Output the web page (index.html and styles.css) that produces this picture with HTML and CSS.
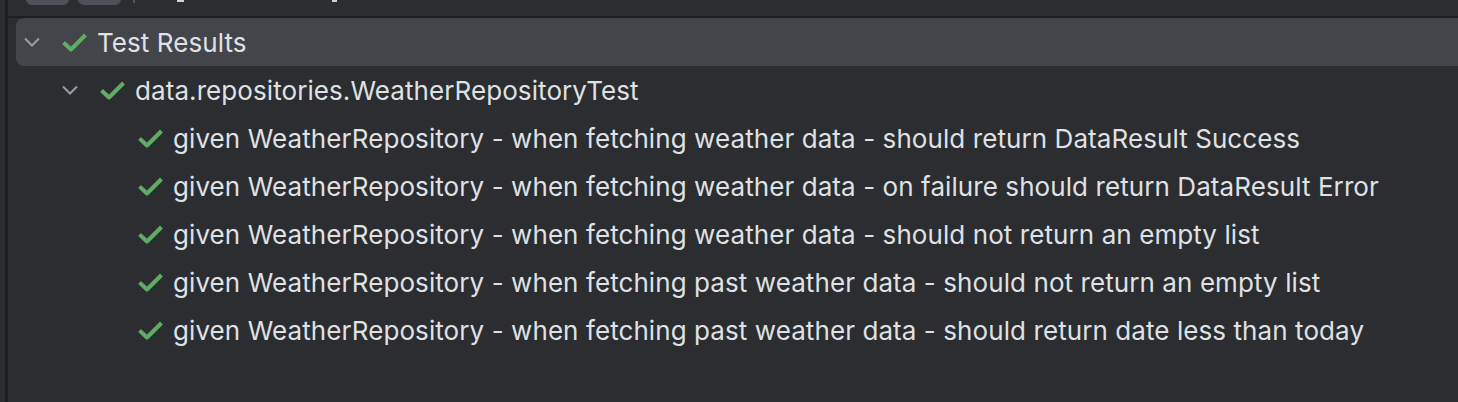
FILE: index.html
```html
<!DOCTYPE html>
<html>
<head>
<meta charset="utf-8">
<link rel="stylesheet" href="styles.css">
</head>
<body>
<div class="app">
  <div class="gutter"></div>
  <div class="divider"></div>
  <div class="panel">
    <div class="toolbar">
      <span class="tb-btn"></span>
      <span class="tb-btn"></span>
      <span class="tb-sep"></span>
      <span class="tb-mark tb-mark1"></span>
      <span class="tb-mark tb-mark2"></span>
    </div>
    <div class="tree">
      <div class="row selected lvl0">
        <span class="chev"><svg width="16" height="10" viewBox="0 0 16 10"><path d="M1 1.5 L8 8.5 L15 1.5" fill="none" stroke="#9a9da4" stroke-width="2"/></svg></span>
        <span class="check"><svg width="28" height="24" viewBox="0 0 28 24"><path d="M3.5 12.5 L11 19.5 L25.5 5" fill="none" stroke="#5fad65" stroke-width="4" stroke-linejoin="round"/></svg></span>
        <span class="label">Test Results</span>
      </div>
      <div class="row lvl1">
        <span class="chev"><svg width="16" height="10" viewBox="0 0 16 10"><path d="M1 1.5 L8 8.5 L15 1.5" fill="none" stroke="#9a9da4" stroke-width="2"/></svg></span>
        <span class="check"><svg width="28" height="24" viewBox="0 0 28 24"><path d="M3.5 12.5 L11 19.5 L25.5 5" fill="none" stroke="#5fad65" stroke-width="4" stroke-linejoin="round"/></svg></span>
        <span class="label">data.repositories.WeatherRepositoryTest</span>
      </div>
      <div class="row lvl2">
        <span class="chev"></span>
        <span class="check"><svg width="28" height="24" viewBox="0 0 28 24"><path d="M3.5 12.5 L11 19.5 L25.5 5" fill="none" stroke="#5fad65" stroke-width="4" stroke-linejoin="round"/></svg></span>
        <span class="label">given WeatherRepository - when fetching weather data - should return DataResult Success</span>
      </div>
      <div class="row lvl2">
        <span class="chev"></span>
        <span class="check"><svg width="28" height="24" viewBox="0 0 28 24"><path d="M3.5 12.5 L11 19.5 L25.5 5" fill="none" stroke="#5fad65" stroke-width="4" stroke-linejoin="round"/></svg></span>
        <span class="label">given WeatherRepository - when fetching weather data - on failure should return DataResult Error</span>
      </div>
      <div class="row lvl2">
        <span class="chev"></span>
        <span class="check"><svg width="28" height="24" viewBox="0 0 28 24"><path d="M3.5 12.5 L11 19.5 L25.5 5" fill="none" stroke="#5fad65" stroke-width="4" stroke-linejoin="round"/></svg></span>
        <span class="label">given WeatherRepository - when fetching weather data - should not return an empty list</span>
      </div>
      <div class="row lvl2">
        <span class="chev"></span>
        <span class="check"><svg width="28" height="24" viewBox="0 0 28 24"><path d="M3.5 12.5 L11 19.5 L25.5 5" fill="none" stroke="#5fad65" stroke-width="4" stroke-linejoin="round"/></svg></span>
        <span class="label">given WeatherRepository - when fetching past weather data - should not return an empty list</span>
      </div>
      <div class="row lvl2">
        <span class="chev"></span>
        <span class="check"><svg width="28" height="24" viewBox="0 0 28 24"><path d="M3.5 12.5 L11 19.5 L25.5 5" fill="none" stroke="#5fad65" stroke-width="4" stroke-linejoin="round"/></svg></span>
        <span class="label">given WeatherRepository - when fetching past weather data - should return date less than today</span>
      </div>
    </div>
  </div>
</div>
</body>
</html>
```
FILE: styles.css
```css
html, body {
  margin: 0;
  padding: 0;
  background: #2b2d30;
  height: 100%;
  overflow: hidden;
}
body {
  font-family: Inter, "Noto Sans", sans-serif;
  color: #dfe1e5;
}
.app {
  display: flex;
  height: 402px;
}
.gutter {
  width: 5px;
  background: #2b2d30;
  flex: none;
}
.divider {
  width: 3px;
  background: #1e1f22;
  flex: none;
}
.panel {
  flex: 1;
  display: flex;
  flex-direction: column;
  min-width: 0;
}
.toolbar {
  height: 16px;
  border-bottom: 2px solid #1e1f22;
  display: flex;
  align-items: flex-start;
  padding-left: 18px;
  overflow: hidden;
}
.tb-btn {
  width: 43px;
  height: 20px;
  margin-top: -15px;
  background: #4e5157;
  border-radius: 6px;
  margin-right: 9px;
  flex: none;
}
.tb-sep {
  width: 2px;
  height: 3px;
  background: #4e5157;
  margin-left: 3px;
  flex: none;
}
.tb-mark {
  height: 2px;
  background: #cfd1d6;
  flex: none;
}
.tb-mark1 {
  width: 7px;
  margin-left: 42px;
}
.tb-mark2 {
  width: 5px;
  margin-left: 148px;
}
.tree {
  padding-left: 8px;
  display: flex;
  flex-direction: column;
}
.row {
  height: 48px;
  display: flex;
  align-items: center;
  font-size: 26px;
  white-space: nowrap;
}
.row.selected {
  background: #43454a;
  border-radius: 8px 0 0 8px;
  margin-right: -12px;
}
.lvl0 { padding-left: 8px; }
.lvl1 { padding-left: 46px; }
.lvl2 { padding-left: 84px; }
.chev {
  width: 36px;
  flex: none;
  display: flex;
  align-items: center;
}
.chev svg { display: block; }
.check {
  width: 28px;
  height: 24px;
  flex: none;
  margin-right: 9px;
}
.check svg { display: block; }
.label {
  letter-spacing: 0.08px;
}
```
